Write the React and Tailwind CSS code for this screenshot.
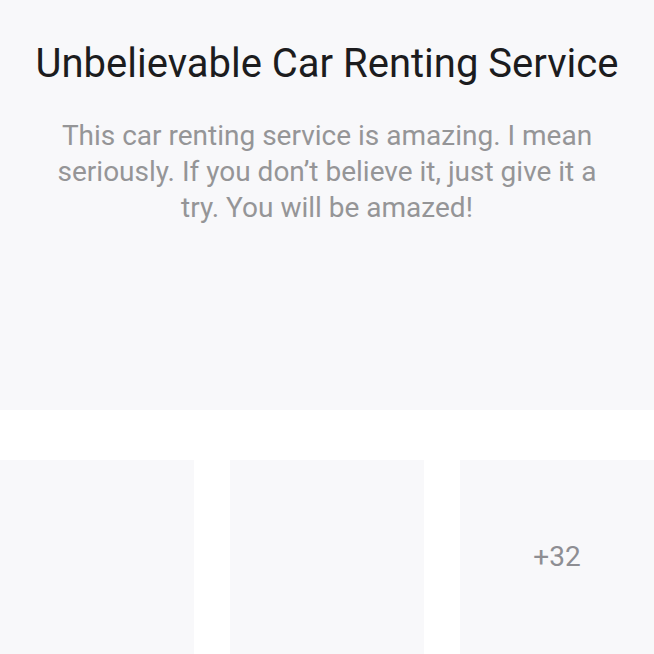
export default function App() {
  return (
    <div className="w-[654px] h-[654px] overflow-hidden bg-white font-['Roboto',sans-serif]">
      <section className="h-[410px] bg-[#f8f8fa] pt-[40px] text-center">
        <h1 className="text-[40px] leading-[48px] text-[#1c1c1e]">Unbelievable Car Renting Service</h1>
        <p className="mx-auto mt-[30px] w-[560px] text-[28px] leading-[36px] text-[#959597]">
          This car renting service is amazing. I mean seriously. If you don’t believe it, just give it a try. You will be amazed!
        </p>
      </section>
      <div className="mt-[50px] grid grid-cols-3 gap-[36px]">
        <div className="h-[220px] bg-[#f8f8fa]" />
        <div className="h-[220px] bg-[#f8f8fa]" />
        <div className="h-[194px] bg-[#f8f8fa] flex items-center justify-center text-[28px] text-[#8e8e93]">+32</div>
      </div>
    </div>
  );
}
